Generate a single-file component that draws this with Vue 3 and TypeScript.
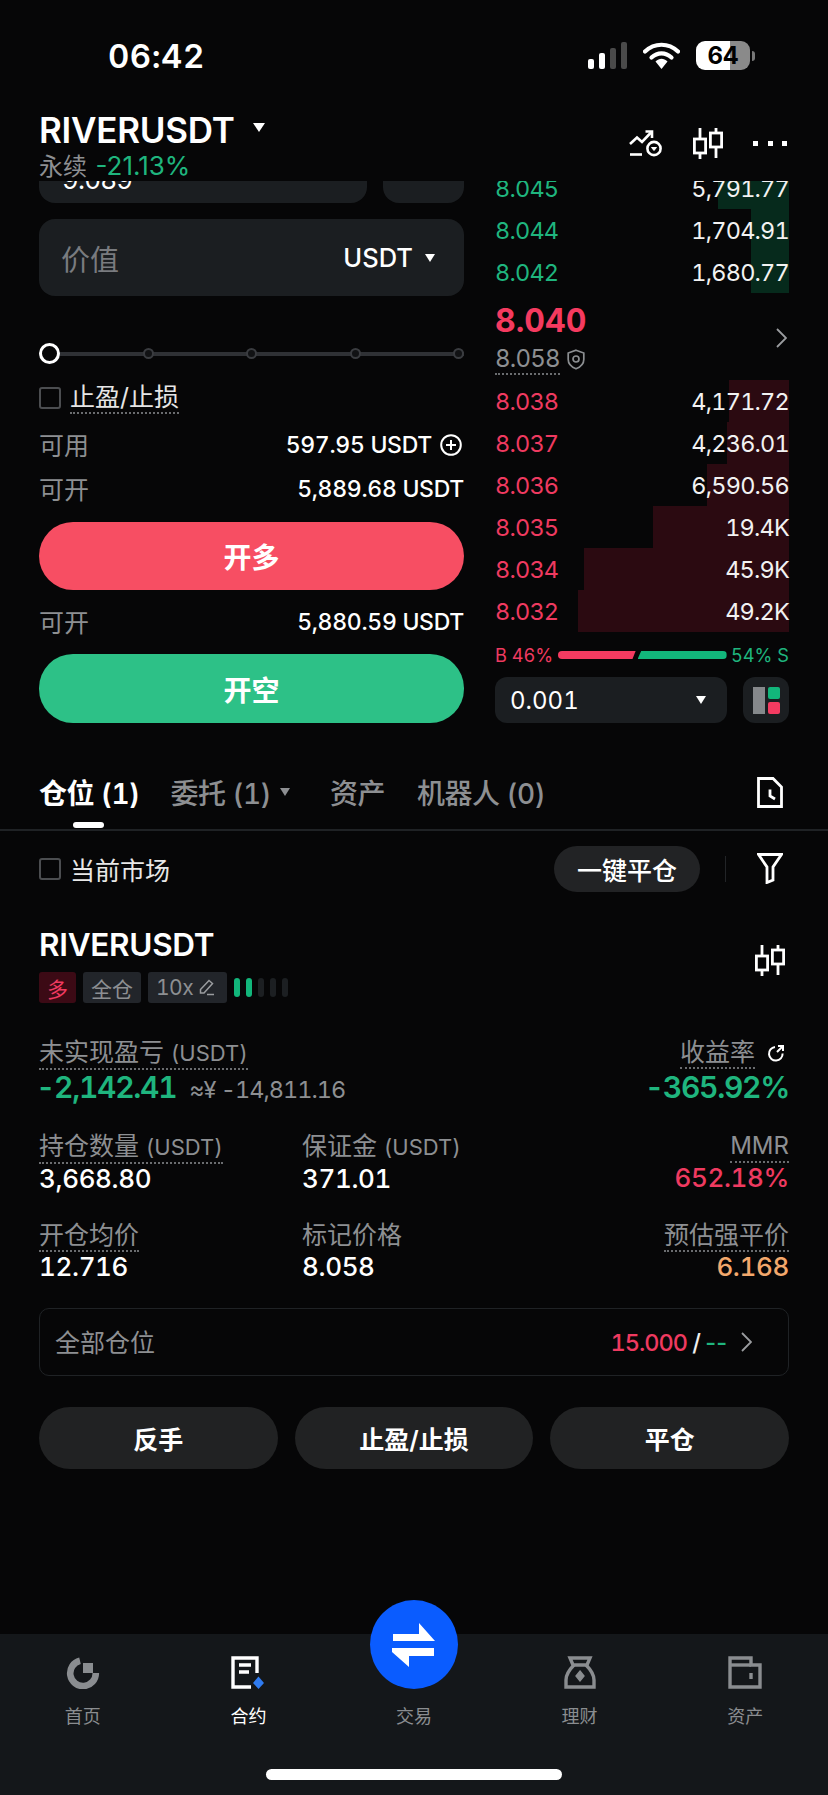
<script setup lang="ts">
const asks = [
  { p: '8.045', q: '5,791.77', w: 71 },
  { p: '8.044', q: '1,704.91', w: 38 },
  { p: '8.042', q: '1,680.77', w: 38 },
]
const bids = [
  { p: '8.038', q: '4,171.72', w: 60 },
  { p: '8.037', q: '4,236.01', w: 62 },
  { p: '8.036', q: '6,590.56', w: 82 },
  { p: '8.035', q: '19.4K', w: 136 },
  { p: '8.034', q: '45.9K', w: 205 },
  { p: '8.032', q: '49.2K', w: 211 },
]
const lev = [1, 1, 0, 0, 0]
</script>

<template>
  <div class="page">
    <div class="status">
      <span class="time">06:42</span>
      <div class="status-right">
        <svg class="sig" width="40" height="27" viewBox="0 0 40 27">
          <rect x="0" y="17" width="6" height="10" rx="2" fill="#fff" />
          <rect x="11" y="11" width="6" height="16" rx="2" fill="#fff" />
          <rect x="22" y="6" width="6" height="21" rx="2" fill="#4a4a4a" />
          <rect x="33" y="0" width="6" height="27" rx="2" fill="#4a4a4a" />
        </svg>
        <svg class="wifi" width="37" height="27" viewBox="0 0 37 27">
          <path d="M2 9.5C11.5 0.5 25.5 0.5 35 9.5" fill="none" stroke="#fff" stroke-width="4.2" stroke-linecap="round" />
          <path d="M8.5 15.5C14.5 10 22.5 10 28.5 15.5" fill="none" stroke="#fff" stroke-width="4.2" stroke-linecap="round" />
          <path d="M12.5 19.5C16.5 15.8 20.5 15.8 24.5 19.5L18.5 27Z" fill="#fff" />
        </svg>
        <div class="battery">
          <span class="bat-num">64</span>
        </div>
        <span class="bat-nib"></span>
      </div>
    </div>

    <header class="head">
      <div class="head-left">
        <div class="title-row">
          <span class="title">RIVERUSDT</span>
          <span class="caret caret-lg"></span>
        </div>
        <div class="sub"><span class="sub-k">永续</span> <span class="green sub-pct">-21.13%</span></div>
      </div>
      <div class="head-icons">
        <svg width="33" height="27" viewBox="0 0 33 27" fill="none" stroke="#fff" stroke-width="2.6">
          <path d="M1 14L8 7.5L13 12L22 2.5" />
          <path d="M16.5 1.5H23V8" />
          <path d="M1 24.5H13" />
          <circle cx="25" cy="18.5" r="6.6" />
          <path d="M22.5 17.5H27.5L25 20.5Z" fill="#fff" stroke-width="1" />
        </svg>
        <svg class="candle" width="30" height="31" viewBox="0 0 30 31" fill="none" stroke="#fff" stroke-width="2.8">
          <path d="M7 0V11M7 25V31M23 0V5M23 19V30" />
          <rect x="1.4" y="11" width="11.2" height="14" />
          <rect x="17.4" y="5" width="11.2" height="14" />
        </svg>
        <div class="dots"><i></i><i></i><i></i></div>
      </div>
    </header>

    <section class="trade">
      <div class="form">
        <div class="clip-row">
          <div class="clip-box clip-wide"><span class="clip-text">9.089</span></div>
          <div class="clip-box clip-narrow"></div>
        </div>
        <div class="value-box">
          <span class="value-ph">价值</span>
          <span class="value-unit">USDT<span class="caret"></span></span>
        </div>
        <div class="slider">
          <span class="knob"></span>
          <span class="tick"></span>
          <span class="tick"></span>
          <span class="tick"></span>
          <span class="tick"></span>
        </div>
        <div class="tp-row">
          <span class="check"></span>
          <span class="tp-label dot">止盈/止损</span>
        </div>
        <div class="kv kv-first">
          <span class="k">可用</span>
          <span class="v">597.95 USDT<svg class="plus" width="22" height="22" viewBox="0 0 22 22" fill="none" stroke="#fff" stroke-width="2">
              <circle cx="11" cy="11" r="9.8" />
              <path d="M11 6V16M6 11H16" />
            </svg></span>
        </div>
        <div class="kv">
          <span class="k">可开</span>
          <span class="v">5,889.68 USDT</span>
        </div>
        <button class="cta cta-long">开多</button>
        <div class="kv kv-short">
          <span class="k">可开</span>
          <span class="v">5,880.59 USDT</span>
        </div>
        <button class="cta cta-short">开空</button>
      </div>

      <div class="book">
        <div class="asks">
          <div v-for="r in asks" :key="r.p" class="row">
            <span class="bar bar-g" :style="{ width: r.w + 'px' }"></span>
            <span class="green px">{{ r.p }}</span>
            <span class="qty">{{ r.q }}</span>
          </div>
        </div>
        <div class="mid">
          <div class="mid-main">
            <div class="last">8.040</div>
            <div class="mark">
              <span class="mark-n dot">8.058</span>
              <svg width="18" height="21" viewBox="0 0 18 21" fill="none" stroke="#8b8e91" stroke-width="1.7">
                <path d="M9 1.2L16.8 4V10.5C16.8 15 13.5 18 9 19.8C4.5 18 1.2 15 1.2 10.5V4Z" />
                <circle cx="9" cy="10" r="3" />
              </svg>
            </div>
          </div>
          <svg class="mid-chev" width="11" height="20" viewBox="0 0 11 20" fill="none" stroke="#9a9c9f" stroke-width="1.8">
            <path d="M1 1L10 10L1 19" />
          </svg>
        </div>
        <div class="bids">
          <div v-for="r in bids" :key="r.p" class="row">
            <span class="bar bar-r" :style="{ width: r.w + 'px' }"></span>
            <span class="red px">{{ r.p }}</span>
            <span class="qty">{{ r.q }}</span>
          </div>
        </div>
        <div class="ratio">
          <span class="red">B 46%</span>
          <div class="ratio-bars">
            <span class="rb rb-r"></span>
            <span class="rb rb-g"></span>
          </div>
          <span class="green">54% S</span>
        </div>
        <div class="book-foot">
          <div class="step">
            <span>0.001</span>
            <span class="caret"></span>
          </div>
          <div class="layout-btn">
            <span class="lb-gray"></span>
            <span class="lb-col"><i class="lb-g"></i><i class="lb-r"></i></span>
          </div>
        </div>
      </div>
    </section>

    <nav class="tabs">
      <span class="tab tab-on">仓位 (1)</span>
      <span class="tab">委托 (1)<span class="caret caret-dim"></span></span>
      <span class="tab">资产</span>
      <span class="tab">机器人 (0)</span>
      <svg class="doc-ico" width="26" height="31" viewBox="0 0 26 31" fill="none" stroke="#fff" stroke-width="2.8">
        <path d="M1.5 1.5H16L24.5 10V29.5H1.5Z" />
        <path d="M13 12.5V19L18 22" />
      </svg>
    </nav>

    <div class="filter">
      <span class="check"></span>
      <span class="filter-label">当前市场</span>
      <span class="pill">一键平仓</span>
      <span class="vline"></span>
      <svg width="26" height="31" viewBox="0 0 26 31" fill="none" stroke="#fff" stroke-width="2.8">
        <path d="M1.5 1.5H24.5L16 14V27L10 29.5V14Z" />
      </svg>
    </div>

    <section class="pos">
      <div class="pos-top">
        <div>
          <div class="pos-title">RIVERUSDT</div>
          <div class="tags">
            <span class="tag tag-r">多</span>
            <span class="tag">全仓</span>
            <span class="tag tag-lev">10x<svg width="16" height="17" viewBox="0 0 16 17" fill="none" stroke="#9a9c9f" stroke-width="1.5">
                <path d="M10 1.5L13.5 4.5L5 14H1.5V10.5Z" />
                <path d="M8 15.5H15" />
              </svg></span>
            <span class="lev">
              <i v-for="(l, i) in lev" :key="i" :class="{ on: l }"></i>
            </span>
          </div>
        </div>
        <svg class="pos-candle" width="30" height="31" viewBox="0 0 30 31" fill="none" stroke="#fff" stroke-width="2.8">
          <path d="M7 0V11M7 25V31M23 0V5M23 19V30" />
          <rect x="1.4" y="11" width="11.2" height="14" />
          <rect x="17.4" y="5" width="11.2" height="14" />
        </svg>
      </div>

      <div class="pnl">
        <div class="pnl-l">
          <div class="lbl-wrap"><span class="lbl dot">未实现盈亏 <span class="lat">(USDT)</span></span></div>
          <div class="pnl-v"><span class="pnl-num green">-2,142.41</span><span class="pnl-cny">≈¥ -14,811.16</span></div>
        </div>
        <div class="pnl-r">
          <div class="lbl-wrap"><span class="lbl dot">收益率</span>
            <svg class="refresh" width="18" height="18" viewBox="0 0 18 18" fill="none" stroke="#fff" stroke-width="2">
              <path d="M8 3A6.8 6.8 0 1 0 15.6 9.5" />
              <path d="M10 8L15.5 2.5M11 2H16V7" />
            </svg>
          </div>
          <div class="pnl-num green">-365.92%</div>
        </div>
      </div>

      <div class="stats">
        <div class="st"><span class="lbl dot">持仓数量 <span class="lat">(USDT)</span></span><b>3,668.80</b></div>
        <div class="st"><span class="lbl nodot">保证金 <span class="lat">(USDT)</span></span><b>371.01</b></div>
        <div class="st st-r"><span class="lbl lbl-mmr dot">MMR</span><b class="red">652.18%</b></div>
        <div class="st"><span class="lbl dot">开仓均价</span><b>12.716</b></div>
        <div class="st"><span class="lbl nodot">标记价格</span><b>8.058</b></div>
        <div class="st st-r"><span class="lbl dot">预估强平价</span><b class="orange">6.168</b></div>
      </div>

      <div class="allpos">
        <span class="allpos-k">全部仓位</span>
        <span class="allpos-v"><span class="red">15.000</span> <span class="slash">/</span> <span class="green dash">--</span></span>
        <svg width="11" height="20" viewBox="0 0 11 20" fill="none" stroke="#9a9c9f" stroke-width="1.8">
          <path d="M1 1L10 10L1 19" />
        </svg>
      </div>

      <div class="actions">
        <button class="act">反手</button>
        <button class="act">止盈/止损</button>
        <button class="act">平仓</button>
      </div>
    </section>

    <footer class="nav">
      <div class="fab">
        <svg width="44" height="44" viewBox="0 0 44 44" fill="#fff">
          <path d="M1 11H27V0L43 18H1Z" />
          <path d="M0 25H42V33H17V44L0 29Z" />
        </svg>
      </div>
      <div class="nav-items">
        <div class="nav-item">
          <svg width="34" height="33" viewBox="0 0 34 33">
            <path d="M14 4.8A12.8 12.8 0 1 0 29.8 17" fill="none" stroke="#8a8d90" stroke-width="6.6" />
            <rect x="17" y="7" width="10" height="10" fill="#8a8d90" />
          </svg>
          <span>首页</span>
        </div>
        <div class="nav-item nav-on">
          <svg width="34" height="33" viewBox="0 0 34 33">
            <path d="M26 17V2H2V31H20" fill="none" stroke="#fff" stroke-width="3.4" />
            <path d="M8 9H20M8 16H18" stroke="#fff" stroke-width="3.4" />
            <path d="M27.5 20.5L33 27L27.5 33L22 27Z" fill="#2f7bf0" />
          </svg>
          <span>合约</span>
        </div>
        <div class="nav-item">
          <span class="nav-gap"></span>
          <span>交易</span>
        </div>
        <div class="nav-item">
          <svg width="34" height="33" viewBox="0 0 34 33" fill="none" stroke="#8a8d90" stroke-width="3.4">
            <path d="M7 2H27L24 9H10Z" />
            <path d="M11 9C6 14 3 18 3 24V31H31V24C31 18 28 14 23 9" />
            <path d="M17 15L21 20L17 25L13 20Z" fill="#8a8d90" stroke-width="1.4" />
          </svg>
          <span>理财</span>
        </div>
        <div class="nav-item">
          <svg width="34" height="33" viewBox="0 0 34 33" fill="none" stroke="#8a8d90" stroke-width="3.4">
            <path d="M2 31V2H23V9H32V31Z" />
            <path d="M2 9H23" />
            <path d="M23 17V23" />
          </svg>
          <span>资产</span>
        </div>
      </div>
      <div class="home-bar"></div>
    </footer>
  </div>
</template>

<style scoped>
.page {
  width: 828px;
  height: 1795px;
  background: #060607;
  color: #fff;
  font-family: Inter, "Noto Sans CJK SC", sans-serif;
  font-variant-numeric: tabular-nums;
  display: flex;
  flex-direction: column;
  overflow: hidden;
}
.green { color: #1fb57e; }
.red { color: #ef3a60; }
.orange { color: #f3a86c; }
.dot { border-bottom: 2px dotted #6a6c6f; }
.nodot { border-bottom: 2px solid transparent; }

/* status */
.status {
  height: 97px;
  flex: none;
  padding: 38px 73px 0 108px;
  display: flex;
  justify-content: space-between;
  align-items: flex-start;
  box-sizing: border-box;
}
.time { font-size: 33px; font-weight: 600; line-height: 37px; letter-spacing: 0.5px; }
.status-right { display: flex; align-items: center; margin-top: 3px; }
.sig { margin-right: 15px; }
.wifi { margin-right: 16px; }
.battery {
  width: 54px;
  height: 29px;
  border-radius: 9px;
  background: linear-gradient(90deg, #fff 0 34px, #8a8a8a 34px);
  display: flex;
  align-items: center;
  justify-content: center;
}
.bat-num { color: #000; font-size: 24px; font-weight: 700; line-height: 29px; }
.bat-nib { width: 3px; height: 10px; border-radius: 0 3px 3px 0; background: #777; margin-left: 2px; }

/* head */
.head {
  height: 84px;
  flex: none;
  padding: 0 41px 0 39px;
  display: flex;
  justify-content: space-between;
  align-items: flex-start;
  background: #060607;
}
.title-row { display: flex; align-items: center; height: 40px; margin-top: 13px; }
.title { font-size: 35px; font-weight: 600; line-height: 40px; letter-spacing: -0.25px; }
.caret {
  display: inline-block;
  width: 0;
  height: 0;
  border-left: 5.5px solid transparent;
  border-right: 5.5px solid transparent;
  border-top: 8px solid #fff;
}
.caret-lg { border-left-width: 6.5px; border-right-width: 6.5px; border-top-width: 9px; margin: -6px 0 0 18px; }
.sub { font-size: 24px; line-height: 30px; margin-top: 1px; white-space: pre; }
.sub-k { color: #8d8f92; }
.sub-pct { font-size: 26px; font-variant-numeric: normal; margin-left: 2px; }
.head-icons { display: flex; align-items: center; margin-top: 31px; }
.candle { margin-left: 31px; }
.dots { display: flex; gap: 9.5px; margin-left: 30px; }
.dots i { width: 5px; height: 5px; background: #fff; display: block; }

/* trade */
.trade { flex: none; display: flex; padding: 0 39px; gap: 31px; height: 542px; }
.form { width: 425px; flex: none; display: flex; flex-direction: column; }
.form > * { flex: none; }
.clip-row { height: 22px; display: flex; gap: 16px; overflow: hidden; align-items: flex-end; }
.clip-box {
  height: 60px;
  flex: none;
  background: #1b1e21;
  border-radius: 0 0 16px 16px;
  box-sizing: border-box;
}
.clip-wide { width: 328px; padding: 24px 0 0 23px; font-size: 26px; line-height: 26px; color: #fff; letter-spacing: -0.8px; }
.clip-narrow { width: 81px; }
.value-box {
  margin-top: 16px;
  height: 77px;
  background: #1b1e21;
  border-radius: 16px;
  display: flex;
  align-items: center;
  justify-content: space-between;
  padding: 0 29px 0 22px;
}
.value-ph { color: #797b7f; font-size: 29px; }
.value-unit { font-size: 25.5px; font-weight: 500; display: flex; align-items: center; gap: 12px; }
.slider {
  margin-top: 47px;
  height: 21px;
  display: flex;
  align-items: center;
  justify-content: space-between;
  background: linear-gradient(#2f3135, #2f3135) center / 100% 4px no-repeat;
}
.knob { width: 21px; height: 21px; box-sizing: border-box; border: 3.5px solid #fff; border-radius: 50%; background: #060607; margin-right: -10px; }
.tick { width: 11px; height: 11px; box-sizing: border-box; border: 2px solid #3a3c40; border-radius: 50%; background: #111214; }
.tp-row { margin-top: 19px; display: flex; align-items: center; height: 30px; gap: 9px; }
.check { width: 22px; height: 22px; box-sizing: border-box; border: 2px solid #4b4d50; border-radius: 3px; flex: none; }
.tp-label { font-size: 25px; line-height: 30px; color: #e6e6e6; }
.kv { display: flex; justify-content: space-between; align-items: center; height: 34px; margin-top: 10px; }
.kv-first { margin-top: 15px; }
.kv-short { margin-top: 15px; }
.k { font-size: 25px; color: #8d8f92; margin-top: -3px; }
.v { font-size: 23px; font-weight: 500; display: flex; align-items: center; white-space: pre; letter-spacing: -0.3px; }
.plus { margin-left: 8px; margin-right: 2px; }
.cta {
  border: 0;
  font-family: inherit;
  color: #fff;
  font-size: 28px;
  font-weight: 600;
  height: 68px;
  border-radius: 34px;
}
.cta-long { background: #f74e63; margin-top: 16px; }
.cta-short { background: #2dc187; margin-top: 15px; height: 69px; }

.book { width: 294px; flex: none; display: flex; flex-direction: column; }
.book > * { flex: none; }
.asks { height: 112px; overflow: hidden; display: flex; flex-direction: column; justify-content: flex-end; }
.row {
  position: relative;
  height: 42px;
  flex: none;
  display: flex;
  justify-content: space-between;
  align-items: center;
  font-size: 23.5px;
  letter-spacing: -0.8px;
}
.bar { position: absolute; right: 0; top: 0; bottom: 0; }
.bar-g { background: #062a1c; }
.bar-r { background: #2b0a11; }
.px, .qty { position: relative; }
.qty { color: #f2f2f2; }
.mid { height: 87px; display: flex; justify-content: space-between; }
.last { color: #f53a5f; font-size: 32px; font-weight: 700; line-height: 40px; margin-top: 8px; }
.mark { display: flex; align-items: center; gap: 7px; margin-top: 1px; height: 34px; }
.mark-n { color: #8d8f92; font-size: 24px; line-height: 29px; letter-spacing: -0.8px; }
.mid-chev { margin: 35px 2px 0 0; }
.ratio { display: flex; align-items: center; height: 24px; margin-top: 11px; font-size: 18.2px; white-space: nowrap; }
.ratio-bars { display: flex; gap: 2px; width: 169px; margin: 0 auto; flex: none; }
.rb { height: 8px; display: block; }
.rb-r { width: 78px; background: #f43b61; border-radius: 4px 0 0 4px; clip-path: polygon(0 0, 100% 0, 96% 100%, 0 100%); }
.rb-g { width: 89px; background: #12b67b; border-radius: 0 4px 4px 0; clip-path: polygon(4% 0, 100% 0, 100% 100%, 0 100%); }
.book-foot { display: flex; gap: 16px; margin-top: 10px; }
.step {
  width: 232px;
  height: 46px;
  background: #1b1e21;
  border-radius: 12px;
  display: flex;
  align-items: center;
  justify-content: space-between;
  padding: 0 21px 0 15px;
  box-sizing: border-box;
  font-size: 24px;
}
.layout-btn {
  width: 46px;
  height: 46px;
  background: #1b1e21;
  border-radius: 12px;
  display: flex;
  gap: 3px;
  align-items: center;
  justify-content: center;
}
.lb-gray { width: 12px; height: 27px; background: #85888b; display: block; }
.lb-col { display: flex; flex-direction: column; gap: 3px; }
.lb-col i { display: block; width: 12px; height: 12px; }
.lb-g { background: #12b67b; border-radius: 2px; }
.lb-r { background: #f43b61; border-radius: 2px; }

/* tabs */
.tabs {
  height: 108px;
  flex: none;
  box-sizing: border-box;
  border-bottom: 2px solid #1f2225;
  display: flex;
  align-items: center;
  padding: 35px 45px 0 39px;
  position: relative;
}
.tab { font-size: 28px; color: #8d8f92; font-weight: 500; margin-right: 32px; position: relative; display: flex; align-items: center; line-height: 34px; white-space: pre; letter-spacing: -0.5px; }
.tab:nth-child(2) { margin-right: 40px; }
.tab-on { color: #fff; font-weight: 600; margin-right: 31px; }
.tab-on::after {
  content: "";
  position: absolute;
  left: 34px;
  width: 31px;
  height: 6px;
  bottom: -17px;
  background: #fff;
  border-radius: 3px;
}
.caret-dim { border-top-color: #8d8f92; margin-left: 9px; margin-top: -3px; }
.doc-ico { margin-left: auto; margin-top: -2px; }

.filter {
  height: 79px;
  flex: none;
  display: flex;
  align-items: center;
  padding: 0 45px 0 39px;
  box-sizing: border-box;
  margin-top: -2px;
}
.filter-label { font-size: 25px; margin-left: 9px; color: #e8e8e8; }
.pill {
  margin-left: auto;
  width: 146px;
  height: 46px;
  border-radius: 23px;
  background: #222325;
  font-size: 25px;
  font-weight: 500;
  display: flex;
  align-items: center;
  justify-content: center;
}
.vline { width: 1px; height: 26px; background: #222427; margin: 0 31px 0 25px; }

/* position */
.pos { padding: 0 39px; flex: none; }
.pos-top { display: flex; justify-content: space-between; align-items: flex-start; margin-top: 19px; }
.pos-title { font-size: 31.5px; font-weight: 600; line-height: 36px; letter-spacing: -0.3px; }
.tags { display: flex; gap: 7px; margin-top: 9px; align-items: center; }
.tag {
  height: 31px;
  padding: 0 8px;
  background: #22252a;
  border-radius: 3px;
  color: #8d8f92;
  font-size: 21px;
  display: flex;
  align-items: center;
  gap: 6px;
}
.tag-r { background: #3c0a15; color: #ef3a60; }
.tag-lev { width: 79px; box-sizing: border-box; letter-spacing: -0.5px; }
.lev { display: flex; gap: 6.5px; }
.lev i { width: 5.5px; height: 19px; border-radius: 3px; background: #1c1f22; display: block; }
.lev i.on { background: #12b67b; }
.pos-candle { margin: 18px 4px 0 0; }
.pnl { display: flex; justify-content: space-between; margin-top: 34px; }
.pnl-r { text-align: right; }
.lbl-wrap { display: flex; height: 31px; align-items: flex-start; justify-content: flex-start; }
.pnl-r .lbl-wrap { justify-content: flex-end; }
.lbl { font-size: 25px; line-height: 30px; color: #8d8f92; white-space: pre; display: inline-block; }
.lat { font-size: 22px; }
.lbl-mmr { font-size: 24px; }
.refresh { margin: 7px 4px 0 12px; }
.pnl-v { display: flex; align-items: baseline; margin-left: -3px; }
.pnl-num { font-size: 30px; font-weight: 600; line-height: 38px; letter-spacing: -1.3px; }
.pnl-cny { font-size: 23.5px; color: #8d8f92; margin-left: 13px; letter-spacing: -1px; }
.stats {
  display: grid;
  grid-template-columns: 263px 1fr auto;
  row-gap: 24px;
  margin-top: 25px;
}
.st { display: flex; flex-direction: column; align-items: flex-start; }
.st-r { align-items: flex-end; }
.st .lbl { margin-bottom: -2px; }
.st b { font-size: 26px; font-weight: 500; line-height: 34px; letter-spacing: -0.35px; }
.allpos {
  margin-top: 24px;
  height: 68px;
  box-sizing: border-box;
  border: 1.5px solid #1f2225;
  border-radius: 10px;
  display: flex;
  align-items: center;
  padding: 0 36px 0 15px;
}
.allpos-k { font-size: 25px; color: #8d8f92; margin-top: -2px; }
.allpos-v { margin-left: auto; margin-right: 14px; font-size: 23.5px; font-weight: 500; white-space: pre; letter-spacing: -1px; }
.dash { font-variant-numeric: normal; letter-spacing: 0; }
.slash { color: #eee; }
.actions { display: flex; gap: 17px; margin-top: 31px; }
.act {
  flex: 1;
  height: 62px;
  border: 0;
  border-radius: 31px;
  background: #212223;
  color: #fff;
  font-family: inherit;
  font-size: 25px;
  font-weight: 600;
}

/* nav */
.nav {
  margin-top: auto;
  height: 161px;
  flex: none;
  background: #14171a;
  position: relative;
}
.fab {
  position: absolute;
  left: 370px;
  top: -34px;
  width: 88px;
  height: 89px;
  border-radius: 50%;
  background: #0a5cff;
  display: flex;
  align-items: center;
  justify-content: center;
}
.nav-items { display: flex; padding-top: 22px; }
.nav-item {
  width: 165.6px;
  display: flex;
  flex-direction: column;
  align-items: center;
  gap: 16px;
  font-size: 18px;
  line-height: 24px;
  color: #8a8d90;
}
.nav-gap { height: 33px; display: block; }
.nav-on { color: #fff; }
.home-bar {
  position: absolute;
  left: 266px;
  top: 135px;
  width: 296px;
  height: 11px;
  border-radius: 6px;
  background: #fff;
}
</style>
